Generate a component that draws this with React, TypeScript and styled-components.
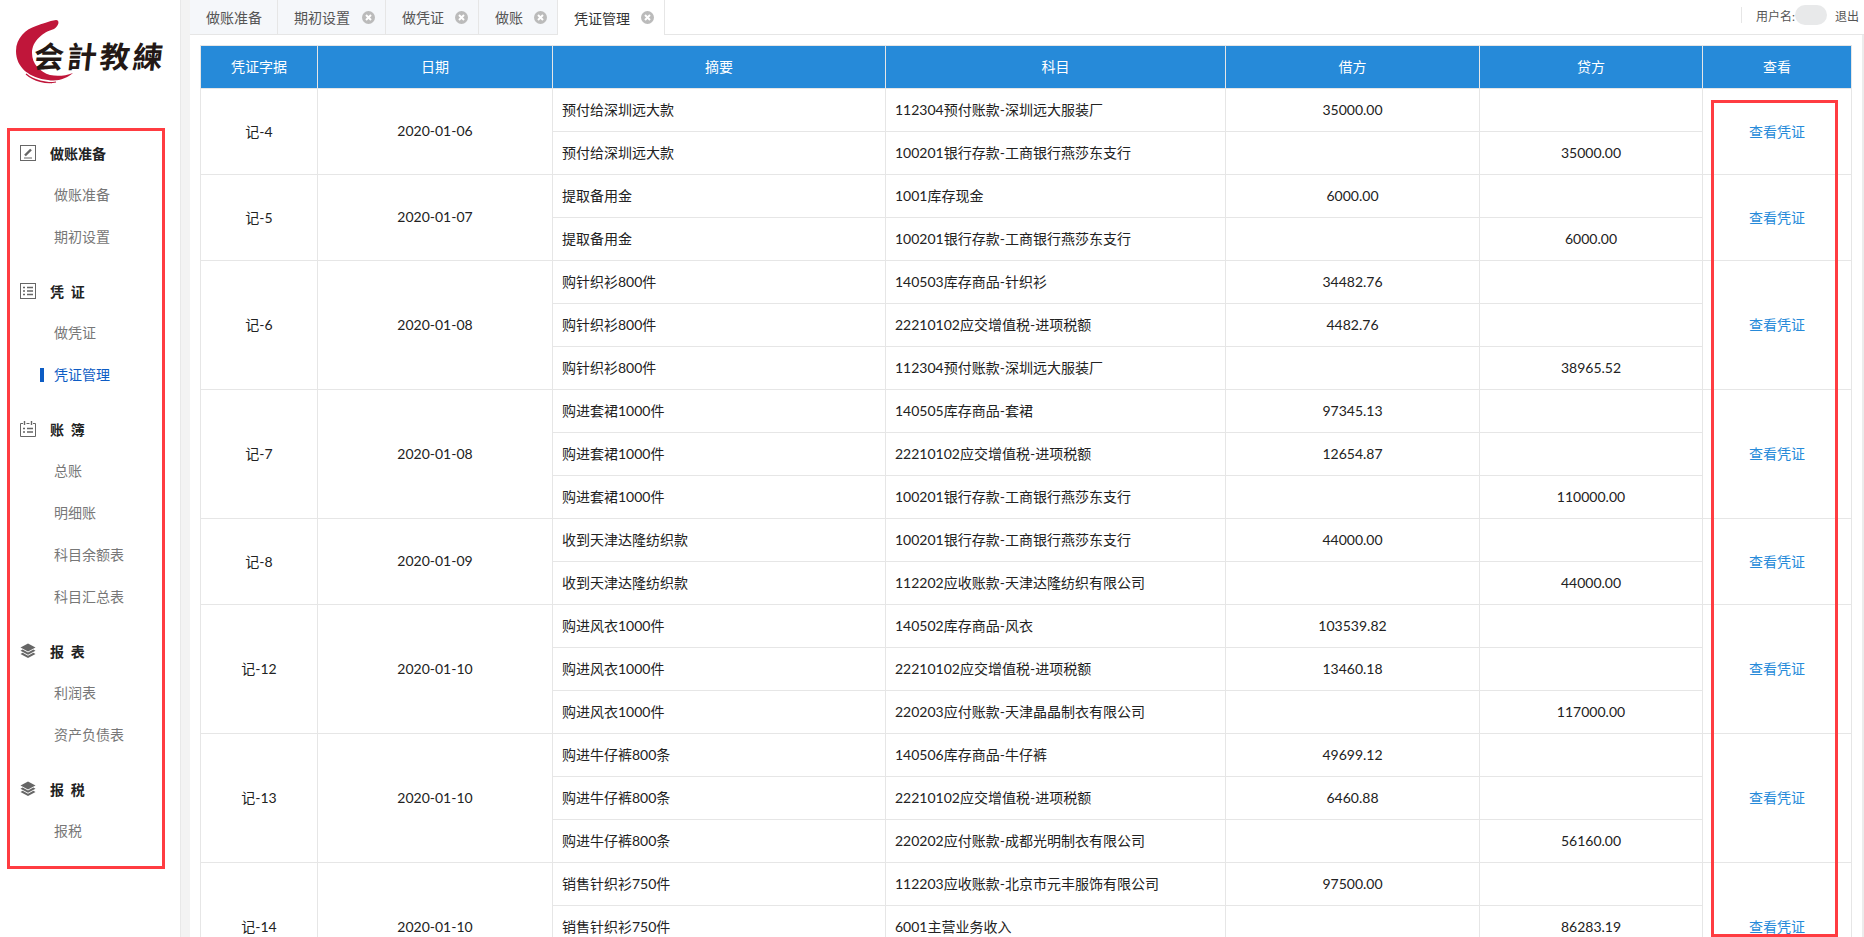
import React, { ReactNode } from 'react';
import styled, { createGlobalStyle } from 'styled-components';

const GlobalStyle = createGlobalStyle`
  html, body {
    margin: 0;
    padding: 0;
    height: 100%;
    overflow: hidden;
    background: #fff;
  }
  body {
    font-family: Lato, "Noto Sans CJK SC", sans-serif;
    font-size: 14px;
    color: #222;
  }
`;

const Page = styled.div`
  position: relative;
  display: flex;
  width: 1864px;
  height: 937px;
  overflow: hidden;
`;

/* sidebar */

const Sidebar = styled.aside`
  flex: 0 0 180px;
  padding-top: 20px;
  box-sizing: border-box;
`;

const LogoWrap = styled.div`
  position: relative;
  height: 66px;
  margin: 0 0 46px 16px;
  width: 150px;
`;

const LogoMark = styled.svg`
  position: absolute;
  left: 0;
  top: 0;
`;

const LogoText = styled.span`
  position: absolute;
  left: 18px;
  top: 16px;
  font-family: "Noto Sans CJK TC", "Noto Sans CJK SC", sans-serif;
  font-size: 30px;
  line-height: 38px;
  font-weight: 700;
  letter-spacing: 3px;
  color: #231815;
  white-space: nowrap;
  transform: skewX(-6deg);
  transform-origin: left center;
`;

const Menu = styled.nav`
  display: flex;
  flex-direction: column;
  gap: 12px;
`;

const Group = styled.div`
  display: flex;
  flex-direction: column;
`;

const GroupTitle = styled.div`
  display: flex;
  align-items: center;
  height: 42px;
  padding-left: 20px;
  font-weight: 700;
  font-size: 14px;
  color: #222;
  white-space: pre;
`;

const GroupIcon = styled.svg`
  flex: 0 0 16px;
  width: 16px;
  height: 16px;
  margin-right: 14px;
  color: #666;
`;

const Item = styled.div<{ $active?: boolean }>`
  position: relative;
  height: 42px;
  line-height: 42px;
  padding-left: 54px;
  font-size: 14px;
  color: ${props => (props.$active ? '#0d5cc4' : '#777')};

  ${props => props.$active && `
    &::before {
      content: '';
      position: absolute;
      left: 40px;
      top: 14px;
      width: 4px;
      height: 14px;
      background: #0d5cc4;
    }
  `}
`;

const Gutter = styled.div`
  flex: 0 0 9px;
  background: #f3f3f3;
  border-left: 1px solid #e8e8e8;
`;

/* main column */

const Main = styled.main`
  flex: 1;
  min-width: 0;
  display: flex;
  flex-direction: column;
`;

const TabBar = styled.div`
  flex: 0 0 34px;
  display: flex;
  align-items: stretch;
  border-bottom: 1px solid #e6e6e6;
  box-sizing: content-box;
`;

const Tab = styled.div<{ $active?: boolean; $width: number }>`
  display: flex;
  align-items: center;
  box-sizing: border-box;
  width: ${props => props.$width}px;
  padding-left: 16px;
  margin-bottom: ${props => (props.$active ? '-1px' : '0')};
  font-size: 14px;
  background: ${props => (props.$active ? '#fff' : '#f5f7fa')};
  border-right: 1px solid #e6e6e6;
  color: ${props => (props.$active ? '#333' : '#555')};
`;

const TabClose = styled.svg`
  width: 13px;
  height: 13px;
  margin-left: auto;
  margin-right: 10px;
`;

const UserBar = styled.div`
  margin-left: auto;
  display: flex;
  align-items: center;
  height: 16px;
  margin-top: 7px;
  padding: 0 5px 0 14px;
  border-left: 1px solid #e6e6e6;
  font-size: 12px;
  color: #555;
`;

const UserLabel = styled.span`
  width: 39px;
  white-space: nowrap;
`;

const BlurredName = styled.span`
  width: 32px;
  height: 20px;
  margin-right: 8px;
  border-radius: 10px;
  background: #e8e9ea;
`;

const Content = styled.div`
  flex: 1;
  padding: 10px 0 0 10px;
  border-right: 2px solid #ececec;
  overflow: hidden;
`;

const GridFrame = styled.div`
  width: 1651px;
  height: 100%;
  border-right: 1px solid #e6e6e6;
`;

const Grid = styled.table`
  border-collapse: collapse;
  table-layout: fixed;
  width: 1651px;
`;

const HeadCell = styled.th`
  height: 43px;
  padding: 0 0 2px;
  box-sizing: border-box;
  background: #268ad9;
  border: 1px solid #e6e6e6;
  font-weight: 400;
  font-size: 14px;
  color: #fff;
  text-align: center;
`;

const Cell = styled.td<{ $left?: boolean }>`
  height: 43px;
  box-sizing: border-box;
  padding: 0 ${props => (props.$left ? '9px' : '0')} 2px;
  border: 1px solid #e6e6e6;
  font-size: 14px;
  color: #222;
  text-align: ${props => (props.$left ? 'left' : 'center')};
  white-space: nowrap;
`;

const ViewLink = styled.a`
  color: #268ad9;
  text-decoration: none;
`;

/* annotation frames */

const Frame = styled.div<{ $x: number; $y: number; $w: number; $h: number }>`
  position: absolute;
  left: ${props => props.$x}px;
  top: ${props => props.$y}px;
  width: ${props => props.$w}px;
  height: ${props => props.$h}px;
  box-sizing: border-box;
  border: 3px solid #ff3c41;
  pointer-events: none;
`;

/* icons */

const EditIcon = () => (
  <GroupIcon viewBox="0 0 16 16" fill="none" stroke="currentColor">
    <rect x="0.5" y="0.5" width="15" height="15" />
    <path d="M4 13h8" />
    <path d="M5 10.500L11 4.500" strokeWidth="2.400" />
  </GroupIcon>
);

const ListIcon = () => (
  <GroupIcon viewBox="0 0 16 16" fill="none" stroke="currentColor">
    <rect x="0.5" y="0.5" width="15" height="15" />
    <path d="M3 4.500h2M3 8h2M3 11.500h2M7 4.500h6M7 8h6M7 11.500h6" strokeWidth="1.600" />
  </GroupIcon>
);

const CalendarIcon = () => (
  <GroupIcon viewBox="0 0 16 16" fill="none" stroke="currentColor">
    <path d="M3 2.500H.5v13h15v-13H13M6.500 2.500h3" />
    <path d="M4.500 0v4M11.500 0v4" strokeWidth="1.400" />
    <path d="M3 7.500h2M3 11h2M7 7.500h6M7 11h6" strokeWidth="1.600" />
  </GroupIcon>
);

const LayersIcon = () => (
  <GroupIcon viewBox="0 0 16 16" fill="currentColor">
    <path d="M8 0.500L15.500 4.500 8 8.500 .5 4.500z" />
    <path d="M2.600 6.600L8 9.500l5.400-2.900 2.100 1.100L8 11.700.5 7.700z" />
    <path d="M2.600 9.800L8 12.700l5.400-2.900 2.100 1.100L8 15 .5 10.900z" />
  </GroupIcon>
);

const CloseIcon = () => (
  <TabClose viewBox="0 0 13 13">
    <circle cx="6.500" cy="6.500" r="6.500" fill="#bbb" />
    <path d="M4 4l5 5M9 4l-5 5" stroke="#fff" strokeWidth="2" />
  </TabClose>
);

const Logo = () => (
  <LogoWrap>
    <LogoMark width="70" height="66" viewBox="0 0 70 66">
      <path
        d="M40 0C44 0 43 6 38 9 27 12 16 21 16 33c0 11 8 19 18 22 7 1.500 15 1 23-2-6 5-15 9-25 7C14 58 0 48 0 31 0 18 10 9 20 6c6-2 13-5 20-6z"
        fill="#c0163a"
      />
      <path d="M10 54c8 7 20 10 30 8M16 58c6 3 12 4 20 5" stroke="#c0163a" strokeWidth="1.200" fill="none" />
    </LogoMark>
    <LogoText>会計教練</LogoText>
  </LogoWrap>
);

/* data */

interface Line {
  memo?: string;
  subject?: string;
  debit?: string;
  credit?: string;
}

interface Voucher {
  no: string;
  date: string;
  lines: Line[];
}

const vouchers: Voucher[] = [
  {
    no: '记-4',
    date: '2020-01-06',
    lines: [
      { memo: '预付给深圳远大款', subject: '112304预付账款-深圳远大服装厂', debit: '35000.00' },
      { memo: '预付给深圳远大款', subject: '100201银行存款-工商银行燕莎东支行', credit: '35000.00' },
    ],
  },
  {
    no: '记-5',
    date: '2020-01-07',
    lines: [
      { memo: '提取备用金', subject: '1001库存现金', debit: '6000.00' },
      { memo: '提取备用金', subject: '100201银行存款-工商银行燕莎东支行', credit: '6000.00' },
    ],
  },
  {
    no: '记-6',
    date: '2020-01-08',
    lines: [
      { memo: '购针织衫800件', subject: '140503库存商品-针织衫', debit: '34482.76' },
      { memo: '购针织衫800件', subject: '22210102应交增值税-进项税额', debit: '4482.76' },
      { memo: '购针织衫800件', subject: '112304预付账款-深圳远大服装厂', credit: '38965.52' },
    ],
  },
  {
    no: '记-7',
    date: '2020-01-08',
    lines: [
      { memo: '购进套裙1000件', subject: '140505库存商品-套裙', debit: '97345.13' },
      { memo: '购进套裙1000件', subject: '22210102应交增值税-进项税额', debit: '12654.87' },
      { memo: '购进套裙1000件', subject: '100201银行存款-工商银行燕莎东支行', credit: '110000.00' },
    ],
  },
  {
    no: '记-8',
    date: '2020-01-09',
    lines: [
      { memo: '收到天津达隆纺织款', subject: '100201银行存款-工商银行燕莎东支行', debit: '44000.00' },
      { memo: '收到天津达隆纺织款', subject: '112202应收账款-天津达隆纺织有限公司', credit: '44000.00' },
    ],
  },
  {
    no: '记-12',
    date: '2020-01-10',
    lines: [
      { memo: '购进风衣1000件', subject: '140502库存商品-风衣', debit: '103539.82' },
      { memo: '购进风衣1000件', subject: '22210102应交增值税-进项税额', debit: '13460.18' },
      { memo: '购进风衣1000件', subject: '220203应付账款-天津晶晶制衣有限公司', credit: '117000.00' },
    ],
  },
  {
    no: '记-13',
    date: '2020-01-10',
    lines: [
      { memo: '购进牛仔裤800条', subject: '140506库存商品-牛仔裤', debit: '49699.12' },
      { memo: '购进牛仔裤800条', subject: '22210102应交增值税-进项税额', debit: '6460.88' },
      { memo: '购进牛仔裤800条', subject: '220202应付账款-成都光明制衣有限公司', credit: '56160.00' },
    ],
  },
  {
    no: '记-14',
    date: '2020-01-10',
    lines: [
      { memo: '销售针织衫750件', subject: '112203应收账款-北京市元丰服饰有限公司', debit: '97500.00' },
      { memo: '销售针织衫750件', subject: '6001主营业务收入', credit: '86283.19' },
      {},
    ],
  },
];

const columns = [
  { title: '凭证字据', width: 117 },
  { title: '日期', width: 235 },
  { title: '摘要', width: 333 },
  { title: '科目', width: 340 },
  { title: '借方', width: 254 },
  { title: '贷方', width: 223 },
  { title: '查看', width: 149 },
];

const menu: { title: string; icon: ReactNode; items: string[] }[] = [
  { title: '做账准备', icon: <EditIcon />, items: ['做账准备', '期初设置'] },
  { title: '凭  证', icon: <ListIcon />, items: ['做凭证', '凭证管理'] },
  { title: '账  簿', icon: <CalendarIcon />, items: ['总账', '明细账', '科目余额表', '科目汇总表'] },
  { title: '报  表', icon: <LayersIcon />, items: ['利润表', '资产负债表'] },
  { title: '报  税', icon: <LayersIcon />, items: ['报税'] },
];

const tabs = [
  { title: '做账准备', width: 88, closable: false },
  { title: '期初设置', width: 108, closable: true },
  { title: '做凭证', width: 93, closable: true },
  { title: '做账', width: 79, closable: true },
  { title: '凭证管理', width: 107, closable: true, active: true },
];

const App = () => (
  <Page>
    <GlobalStyle />
    <Sidebar>
      <Logo />
      <Menu>
        {menu.map(group => (
          <Group key={group.title}>
            <GroupTitle>
              {group.icon}
              {group.title}
            </GroupTitle>
            {group.items.map(item => (
              <Item key={item} $active={item === '凭证管理'}>
                {item}
              </Item>
            ))}
          </Group>
        ))}
      </Menu>
    </Sidebar>
    <Gutter />
    <Main>
      <TabBar>
        {tabs.map(tab => (
          <Tab key={tab.title} $active={tab.active} $width={tab.width}>
            {tab.title}
            {tab.closable && <CloseIcon />}
          </Tab>
        ))}
        <UserBar>
          <UserLabel>用户名:</UserLabel>
          <BlurredName />
          退出
        </UserBar>
      </TabBar>
      <Content>
        <GridFrame>
          <Grid>
            <colgroup>
              {columns.map(col => (
                <col key={col.title} width={col.width} />
              ))}
            </colgroup>
            <thead>
              <tr>
                {columns.map(col => (
                  <HeadCell key={col.title}>{col.title}</HeadCell>
                ))}
              </tr>
            </thead>
            <tbody>
              {vouchers.map(voucher =>
                voucher.lines.map((line, i) => (
                  <tr key={voucher.no + i}>
                    {i === 0 && <Cell rowSpan={voucher.lines.length}>{voucher.no}</Cell>}
                    {i === 0 && <Cell rowSpan={voucher.lines.length}>{voucher.date}</Cell>}
                    <Cell $left>{line.memo}</Cell>
                    <Cell $left>{line.subject}</Cell>
                    <Cell>{line.debit}</Cell>
                    <Cell>{line.credit}</Cell>
                    {i === 0 && (
                      <Cell rowSpan={voucher.lines.length}>
                        <ViewLink href="#">查看凭证</ViewLink>
                      </Cell>
                    )}
                  </tr>
                )),
              )}
            </tbody>
          </Grid>
        </GridFrame>
      </Content>
    </Main>
    <Frame $x={7} $y={128} $w={158} $h={741} />
    <Frame $x={1711} $y={100} $w={127} $h={837} />
  </Page>
);

export default App;
